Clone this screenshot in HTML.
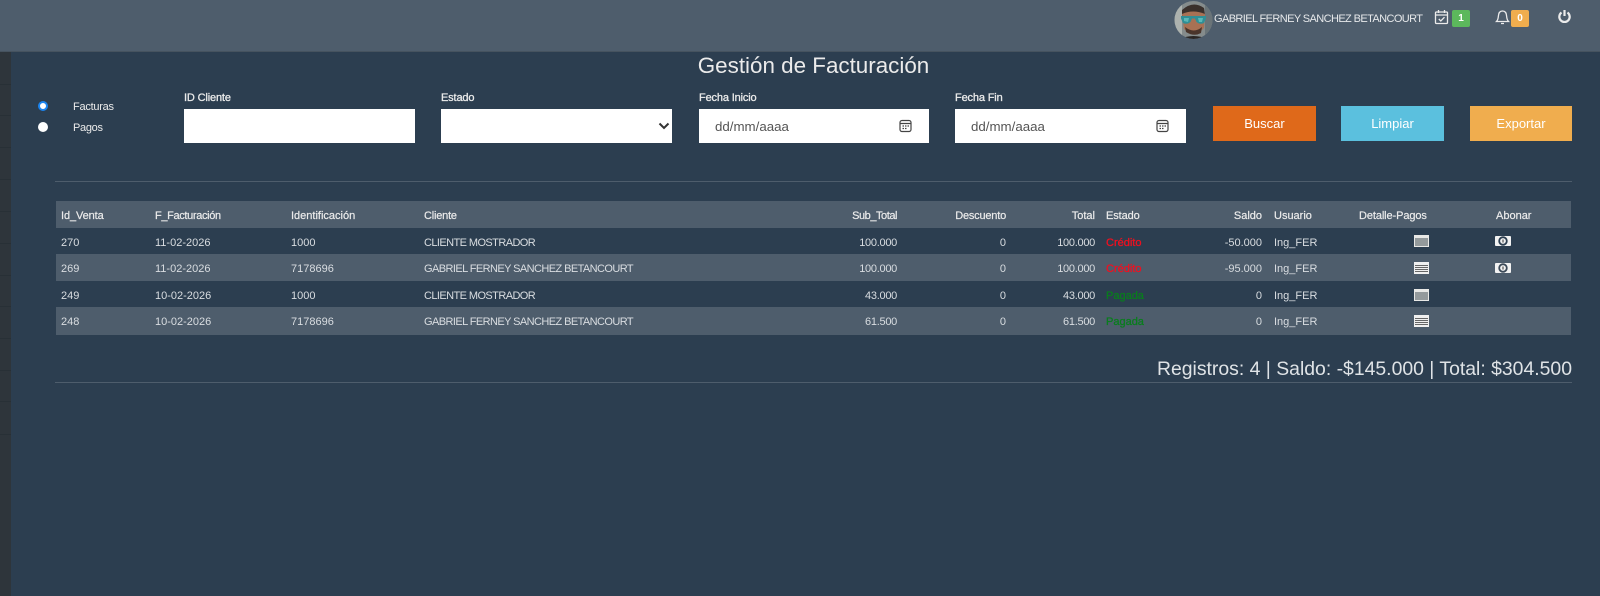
<!DOCTYPE html>
<html lang="es"><head><meta charset="utf-8"><title>Gestión de Facturación</title>
<style>
*{box-sizing:border-box}
html,body{margin:0;padding:0;width:1600px;height:596px;overflow:hidden;background:#2c3e50;font-family:"Liberation Sans",sans-serif;color:#ebebeb}
#w{position:relative;width:1600px;height:596px;overflow:hidden;filter:blur(.3px)}
.a{position:absolute;white-space:nowrap}
.t{position:absolute;white-space:nowrap;font-size:11px;line-height:14px;height:14px}
.h{-webkit-text-stroke:.2px #ebebeb;top:209px}
.r{text-align:right}
.n{letter-spacing:-.28px}
.bar{position:absolute;left:56px;width:1515px;background:#4e5d6c}
.lbl{position:absolute;white-space:nowrap;font-size:11px;line-height:14px;top:91px;letter-spacing:-.15px;color:#ebebeb;-webkit-text-stroke:.3px #ebebeb}
.inp{position:absolute;top:109px;height:34px;background:#fff;width:231px}
.date{position:absolute;left:16px;top:10px;font-size:13.3px;line-height:16px;color:#555}
.btn{position:absolute;top:106px;height:35px;width:103px;color:#fff;font-size:13px;line-height:35px;text-align:center}
.c{color:#d9dde1}
.cr{left:1106px;color:#f01020;-webkit-text-stroke:.3px #f01020}
.pg{left:1106px;color:#0a7d1e;-webkit-text-stroke:.3px #0a7d1e}
.cl{left:424px;letter-spacing:-.58px}
.line{position:absolute;left:0;width:11px;height:1px;background:#283036}
</style></head><body><div id="w">
<div class="a" style="left:0;top:52px;width:11px;height:544px;background:#2e353b"></div>
<div class="line" style="top:84px"></div><div class="line" style="top:115px"></div><div class="line" style="top:147px"></div><div class="line" style="top:179px"></div><div class="line" style="top:211px"></div><div class="line" style="top:243px"></div><div class="line" style="top:275px"></div><div class="line" style="top:306px"></div><div class="line" style="top:338px"></div><div class="line" style="top:370px"></div><div class="line" style="top:401px"></div><div class="line" style="top:434px"></div>

<div class="a" style="left:0;top:0;width:1600px;height:52px;background:#4e5d6c;border-bottom:1px solid #46535f"></div>
<svg class="a" style="left:1174px;top:0" width="39" height="40" viewBox="0 0 39 40">
<defs><clipPath id="av"><circle cx="19.5" cy="20" r="19"/></clipPath></defs>
<g clip-path="url(#av)"><rect width="39" height="40" fill="#858c8c"/><path d="M0 0H8V40H0Z" fill="#adb2ae"/><path d="M31 0H39V40H31Z" fill="#6a7478"/>
<path d="M8 10Q19 0 30 8L31 15 8 16Z" fill="#3a302b"/><path d="M8 14Q19 9 31 14L30 28Q21 38 10 29Z" fill="#a87154"/><path d="M11 27Q20 34 28 27L27 33Q20 37 12 32Z" fill="#4a352b"/><path d="M4 40Q19 32 36 40Z" fill="#2a2624"/>
<path d="M7 16H32V18.500L30 23Q26 25 22.500 22L21 18.500H18L16.500 22Q13 25 9 23L7 18.500Z" fill="#2f8f96"/><path d="M10 18L15 18 14 22 10 21Z" fill="#5ab8b8"/><path d="M24 18L29 18 28 22 25 22Z" fill="#5ab8b8"/></g></svg>
<div class="t" style="left:1214px;top:12px;letter-spacing:-.6px;color:#e6e8ea">GABRIEL FERNEY SANCHEZ BETANCOURT</div>
<svg class="a" style="left:1434px;top:9px" width="15" height="16" viewBox="0 0 15 16" fill="none" stroke="#ebebeb" stroke-width="1.300"><rect x="1.500" y="3" width="12" height="11.500" rx="1"/><path d="M1.500 6H13.500M4.500 1V4M10.500 1V4M4.800 10L6.800 12 10.500 8.200"/></svg>
<div class="a" style="left:1452px;top:10px;width:18px;height:17px;background:#5cb85c;border-radius:2px;color:#fff;font-size:10px;font-weight:bold;line-height:17px;text-align:center">1</div>
<svg class="a" style="left:1495px;top:9px" width="15" height="16" viewBox="0 0 15 16" fill="none" stroke="#ebebeb" stroke-width="1.300"><path d="M1.500 12.500H13.500C12 11 11.800 9.500 11.600 7 11.400 4 10 2 7.500 2S3.600 4 3.400 7C3.200 9.500 3 11 1.500 12.500ZM6 14.500H9"/></svg>
<div class="a" style="left:1511px;top:10px;width:18px;height:17px;background:#f0ad4e;border-radius:2px;color:#fff;font-size:10px;font-weight:bold;line-height:17px;text-align:center">0</div>
<svg class="a" style="left:1557px;top:9px" width="15" height="15" viewBox="0 0 15 15" fill="none" stroke="#ebebeb" stroke-width="2.200"><path d="M4.500 3.500A5.200 5.200 0 1 0 10.500 3.500M7.500 1V7"/></svg>

<div class="a" style="left:648px;top:52px;width:331px;text-align:center;font-size:22.400px;line-height:28px;color:#ebebeb">Gestión de Facturación</div>

<div class="a" style="left:38px;top:101px;width:10px;height:10px;border-radius:50%;background:#fff;border:2.500px solid #1a84f0"></div>
<div class="a" style="left:38px;top:122px;width:10px;height:10px;border-radius:50%;background:#fff"></div>
<div class="t" style="left:73px;top:100px;letter-spacing:-.25px">Facturas</div>
<div class="t" style="left:73px;top:121px;letter-spacing:-.3px">Pagos</div>

<div class="lbl" style="left:184px">ID Cliente</div><div class="inp" style="left:184px"></div>
<div class="lbl" style="left:441px">Estado</div><div class="inp" style="left:441px"><svg class="a" style="left:217px;top:13px" width="12" height="9" viewBox="0 0 12 9" fill="none" stroke="#333" stroke-width="2"><path d="M1.500 1.500L6 6 10.500 1.500"/></svg></div>
<div class="lbl" style="left:699px">Fecha Inicio</div><div class="inp" style="left:699px;width:230px"><div class="date">dd/mm/aaaa</div><svg class="a" style="left:200px;top:10px" width="13" height="14" viewBox="0 0 13 14" fill="none" stroke="#444" stroke-width="1.200"><rect x="1" y="1.500" width="11" height="11" rx="2"/><path d="M1 4.500H12M3.500 7H5M6 7H7.500M8.500 7H10M3.500 9.500H5M6 9.500H7.500"/></svg></div>
<div class="lbl" style="left:955px">Fecha Fin</div><div class="inp" style="left:955px"><div class="date">dd/mm/aaaa</div><svg class="a" style="left:201px;top:10px" width="13" height="14" viewBox="0 0 13 14" fill="none" stroke="#444" stroke-width="1.200"><rect x="1" y="1.500" width="11" height="11" rx="2"/><path d="M1 4.500H12M3.500 7H5M6 7H7.500M8.500 7H10M3.500 9.500H5M6 9.500H7.500"/></svg></div>

<div class="btn" style="left:1213px;background:#df691a">Buscar</div>
<div class="btn" style="left:1341px;background:#5bc0de">Limpiar</div>
<div class="btn" style="left:1470px;width:102px;background:#f0ad4e">Exportar</div>

<div class="a" style="left:55px;top:181px;width:1517px;height:1px;background:#4e5d6c"></div>

<div class="bar" style="top:201px;height:27px"></div>
<div class="bar" style="top:254px;height:27px"></div>
<div class="bar" style="top:307px;height:28px"></div>

<div class="t h" style="left:61px;letter-spacing:-.1px">Id_Venta</div>
<div class="t h" style="left:155px;letter-spacing:-.35px">F_Facturación</div>
<div class="t h" style="left:291px">Identificación</div>
<div class="t h" style="left:424px;letter-spacing:-.2px">Cliente</div>
<div class="t h r" style="right:703px;letter-spacing:-.45px">Sub_Total</div>
<div class="t h r" style="right:594px;letter-spacing:-.2px">Descuento</div>
<div class="t h r" style="right:505px">Total</div>
<div class="t h" style="left:1106px;letter-spacing:-.1px">Estado</div>
<div class="t h r" style="right:338px">Saldo</div>
<div class="t h" style="left:1274px">Usuario</div>
<div class="t h" style="left:1359px;letter-spacing:-.1px">Detalle-Pagos</div>
<div class="t h" style="left:1496px">Abonar</div>

<div class="t c" style="left:61px;top:236px">270</div><div class="t c" style="left:155px;top:236px">11-02-2026</div><div class="t c" style="left:291px;top:236px">1000</div><div class="t c cl" style="top:236px">CLIENTE MOSTRADOR</div><div class="t c r n" style="right:703px;top:236px">100.000</div><div class="t c r" style="right:594px;top:236px">0</div><div class="t c r n" style="right:505px;top:236px">100.000</div><div class="t cr" style="top:236px">Crédito</div><div class="t c r" style="right:338px;top:236px">-50.000</div><div class="t c" style="left:1274px;top:236px">Ing_FER</div>

<div class="t c" style="left:61px;top:262px">269</div><div class="t c" style="left:155px;top:262px">11-02-2026</div><div class="t c" style="left:291px;top:262px">7178696</div><div class="t c cl" style="top:262px">GABRIEL FERNEY SANCHEZ BETANCOURT</div><div class="t c r n" style="right:703px;top:262px">100.000</div><div class="t c r" style="right:594px;top:262px">0</div><div class="t c r n" style="right:505px;top:262px">100.000</div><div class="t cr" style="top:262px">Crédito</div><div class="t c r" style="right:338px;top:262px">-95.000</div><div class="t c" style="left:1274px;top:262px">Ing_FER</div>

<div class="t c" style="left:61px;top:289px">249</div><div class="t c" style="left:155px;top:289px">10-02-2026</div><div class="t c" style="left:291px;top:289px">1000</div><div class="t c cl" style="top:289px">CLIENTE MOSTRADOR</div><div class="t c r n" style="right:703px;top:289px">43.000</div><div class="t c r" style="right:594px;top:289px">0</div><div class="t c r n" style="right:505px;top:289px">43.000</div><div class="t pg" style="top:289px">Pagada</div><div class="t c r" style="right:338px;top:289px">0</div><div class="t c" style="left:1274px;top:289px">Ing_FER</div>

<div class="t c" style="left:61px;top:315px">248</div><div class="t c" style="left:155px;top:315px">10-02-2026</div><div class="t c" style="left:291px;top:315px">7178696</div><div class="t c cl" style="top:315px">GABRIEL FERNEY SANCHEZ BETANCOURT</div><div class="t c r n" style="right:703px;top:315px">61.500</div><div class="t c r" style="right:594px;top:315px">0</div><div class="t c r n" style="right:505px;top:315px">61.500</div><div class="t pg" style="top:315px">Pagada</div><div class="t c r" style="right:338px;top:315px">0</div><div class="t c" style="left:1274px;top:315px">Ing_FER</div>

<svg class="a" style="left:1414px;top:235px" width="15" height="12" viewBox="0 0 15 12"><rect width="15" height="12" fill="#e8e8e6"/><rect x="1" y="3" width="13" height="8" fill="#949a9c"/></svg>
<svg class="a" style="left:1414px;top:262px" width="15" height="12" viewBox="0 0 15 12"><rect width="15" height="12" fill="#f0f0f0"/><path d="M1 3.500H14M1 5.500H14M1 7.500H14M1 9.500H14" stroke="#666" stroke-width="1"/></svg>
<svg class="a" style="left:1414px;top:289px" width="15" height="12" viewBox="0 0 15 12"><rect width="15" height="12" fill="#e8e8e6"/><rect x="1" y="3" width="13" height="8" fill="#949a9c"/></svg>
<svg class="a" style="left:1414px;top:315px" width="15" height="12" viewBox="0 0 15 12"><rect width="15" height="12" fill="#f0f0f0"/><path d="M1 3.500H14M1 5.500H14M1 7.500H14M1 9.500H14" stroke="#666" stroke-width="1"/></svg>
<svg class="a" style="left:1495px;top:236px" width="16" height="10" viewBox="0 0 16 10"><rect width="16" height="10" rx="1" fill="#f2f2f2"/><circle cx="8" cy="5" r="3.800" fill="none" stroke="#2c3e50" stroke-width="1.800"/><path d="M8 3.500V6.500" stroke="#333" stroke-width="1"/></svg>
<svg class="a" style="left:1495px;top:263px" width="16" height="10" viewBox="0 0 16 10"><rect width="16" height="10" rx="1" fill="#f2f2f2"/><circle cx="8" cy="5" r="3.800" fill="none" stroke="#3c4a58" stroke-width="1.800"/><path d="M8 3.500V6.500" stroke="#333" stroke-width="1"/></svg>

<div class="a r" style="right:28px;top:357px;font-size:19.400px;line-height:24px;color:#dfe3e6">Registros: 4 | Saldo: -$145.000 | Total: $304.500</div>
<div class="a" style="left:55px;top:382px;width:1517px;height:1px;background:#4e5d6c"></div>
</div></body></html>
